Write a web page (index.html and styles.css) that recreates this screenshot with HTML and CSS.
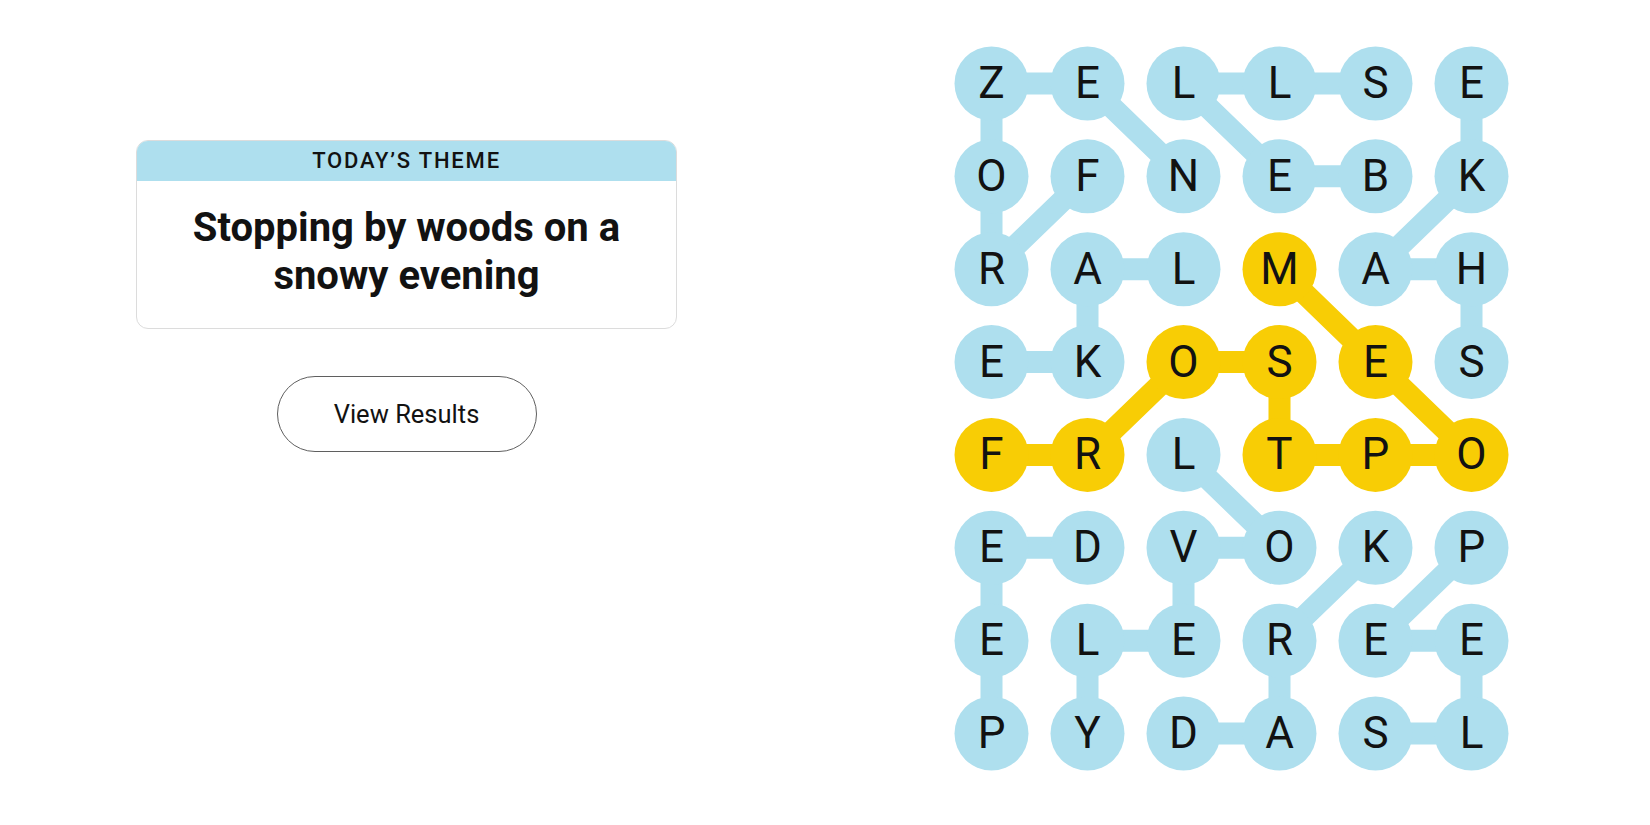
FILE: index.html
```html
<!DOCTYPE html>
<html lang="en">
<head>
<meta charset="utf-8">
<title>Strands</title>
<link rel="stylesheet" href="styles.css">
</head>
<body>
<main class="page">
  <section class="left">
    <div class="theme-card">
      <div class="theme-header">TODAY’S THEME</div>
      <h1 class="theme-title">Stopping by woods on a snowy evening</h1>
    </div>
    <button class="results-btn" type="button">View Results</button>
  </section>
  <section class="board">
    <svg class="board-svg" width="590" height="760" viewBox="0 0 590 760" xmlns="http://www.w3.org/2000/svg">
      <g transform="translate(51.5 53.5)">
        <g class="links-blue">
          <polyline points="96,92.86 0,185.71 0,92.86 0,0 96,0 192,92.86"/>
          <polyline points="384,92.86 288,92.86 192,0 288,0 384,0"/>
          <polyline points="480,278.57 480,185.71 384,185.71 480,92.86 480,0"/>
          <polyline points="192,185.71 96,185.71 96,278.57 0,278.57"/>
          <polyline points="192,371.43 288,464.29 192,464.29 192,557.14 96,557.14 96,650"/>
          <polyline points="96,464.29 0,464.29 0,557.14 0,650"/>
          <polyline points="192,650 288,650 288,557.14 384,464.29"/>
          <polyline points="384,650 480,650 480,557.14 384,557.14 480,464.29"/>
        </g>
        <g class="links-yellow">
          <polyline points="0,371.43 96,371.43 192,278.57 288,278.57 288,371.43 384,371.43 480,371.43 384,278.57 288,185.71"/>
        </g>
        <g class="dots">
          <circle class="b" cx="0" cy="0" r="37"/><circle class="b" cx="96" cy="0" r="37"/><circle class="b" cx="192" cy="0" r="37"/><circle class="b" cx="288" cy="0" r="37"/><circle class="b" cx="384" cy="0" r="37"/><circle class="b" cx="480" cy="0" r="37"/>
          <circle class="b" cx="0" cy="92.86" r="37"/><circle class="b" cx="96" cy="92.86" r="37"/><circle class="b" cx="192" cy="92.86" r="37"/><circle class="b" cx="288" cy="92.86" r="37"/><circle class="b" cx="384" cy="92.86" r="37"/><circle class="b" cx="480" cy="92.86" r="37"/>
          <circle class="b" cx="0" cy="185.71" r="37"/><circle class="b" cx="96" cy="185.71" r="37"/><circle class="b" cx="192" cy="185.71" r="37"/><circle class="y" cx="288" cy="185.71" r="37"/><circle class="b" cx="384" cy="185.71" r="37"/><circle class="b" cx="480" cy="185.71" r="37"/>
          <circle class="b" cx="0" cy="278.57" r="37"/><circle class="b" cx="96" cy="278.57" r="37"/><circle class="y" cx="192" cy="278.57" r="37"/><circle class="y" cx="288" cy="278.57" r="37"/><circle class="y" cx="384" cy="278.57" r="37"/><circle class="b" cx="480" cy="278.57" r="37"/>
          <circle class="y" cx="0" cy="371.43" r="37"/><circle class="y" cx="96" cy="371.43" r="37"/><circle class="b" cx="192" cy="371.43" r="37"/><circle class="y" cx="288" cy="371.43" r="37"/><circle class="y" cx="384" cy="371.43" r="37"/><circle class="y" cx="480" cy="371.43" r="37"/>
          <circle class="b" cx="0" cy="464.29" r="37"/><circle class="b" cx="96" cy="464.29" r="37"/><circle class="b" cx="192" cy="464.29" r="37"/><circle class="b" cx="288" cy="464.29" r="37"/><circle class="b" cx="384" cy="464.29" r="37"/><circle class="b" cx="480" cy="464.29" r="37"/>
          <circle class="b" cx="0" cy="557.14" r="37"/><circle class="b" cx="96" cy="557.14" r="37"/><circle class="b" cx="192" cy="557.14" r="37"/><circle class="b" cx="288" cy="557.14" r="37"/><circle class="b" cx="384" cy="557.14" r="37"/><circle class="b" cx="480" cy="557.14" r="37"/>
          <circle class="b" cx="0" cy="650" r="37"/><circle class="b" cx="96" cy="650" r="37"/><circle class="b" cx="192" cy="650" r="37"/><circle class="b" cx="288" cy="650" r="37"/><circle class="b" cx="384" cy="650" r="37"/><circle class="b" cx="480" cy="650" r="37"/>
        </g>
        <g class="letters">
          <text x="0" y="14.5">Z</text><text x="96" y="14.5">E</text><text x="192" y="14.5">L</text><text x="288" y="14.5">L</text><text x="384" y="14.5">S</text><text x="480" y="14.5">E</text>
          <text x="0" y="107.36">O</text><text x="96" y="107.36">F</text><text x="192" y="107.36">N</text><text x="288" y="107.36">E</text><text x="384" y="107.36">B</text><text x="480" y="107.36">K</text>
          <text x="0" y="200.21">R</text><text x="96" y="200.21">A</text><text x="192" y="200.21">L</text><text x="288" y="200.21">M</text><text x="384" y="200.21">A</text><text x="480" y="200.21">H</text>
          <text x="0" y="293.07">E</text><text x="96" y="293.07">K</text><text x="192" y="293.07">O</text><text x="288" y="293.07">S</text><text x="384" y="293.07">E</text><text x="480" y="293.07">S</text>
          <text x="0" y="385.93">F</text><text x="96" y="385.93">R</text><text x="192" y="385.93">L</text><text x="288" y="385.93">T</text><text x="384" y="385.93">P</text><text x="480" y="385.93">O</text>
          <text x="0" y="478.79">E</text><text x="96" y="478.79">D</text><text x="192" y="478.79">V</text><text x="288" y="478.79">O</text><text x="384" y="478.79">K</text><text x="480" y="478.79">P</text>
          <text x="0" y="571.64">E</text><text x="96" y="571.64">L</text><text x="192" y="571.64">E</text><text x="288" y="571.64">R</text><text x="384" y="571.64">E</text><text x="480" y="571.64">E</text>
          <text x="0" y="664.5">P</text><text x="96" y="664.5">Y</text><text x="192" y="664.5">D</text><text x="288" y="664.5">A</text><text x="384" y="664.5">S</text><text x="480" y="664.5">L</text>
        </g>
      </g>
    </svg>
  </section>
</main>
</body>
</html>
```

FILE: styles.css
```css
* {
  box-sizing: border-box;
}

html, body {
  margin: 0;
  padding: 0;
  background: #ffffff;
}

body {
  font-family: Roboto, "Liberation Sans", Arial, sans-serif;
  color: #121212;
}

.page {
  display: flex;
  align-items: flex-start;
  width: 1650px;
  height: 825px;
}

.left {
  width: 813px;
  padding-top: 140px;
  display: flex;
  flex-direction: column;
  align-items: center;
}

.theme-card {
  width: 541px;
  border: 1px solid #dcdcdc;
  border-radius: 12px;
  overflow: hidden;
  background: #ffffff;
}

.theme-header {
  height: 40px;
  line-height: 40px;
  background: #aedfee;
  text-align: center;
  font-size: 22px;
  font-weight: 500;
  letter-spacing: 1.8px;
  color: #121212;
}

.theme-title {
  margin: 0;
  padding: 23px 24px 28px;
  text-align: center;
  font-size: 40px;
  line-height: 48px;
  font-weight: 700;
  color: #121212;
}

.results-btn {
  margin-top: 47px;
  width: 260px;
  height: 76px;
  border: 1px solid #5f5f5f;
  border-radius: 38px;
  background: #ffffff;
  font-family: Roboto, "Liberation Sans", Arial, sans-serif;
  font-size: 25.5px;
  font-weight: 400;
  color: #121212;
  padding: 0;
}

.board {
  margin-left: 127px;
  margin-top: 30px;
}

.board-svg {
  display: block;
}

.links-blue polyline {
  fill: none;
  stroke: #aedfee;
  stroke-width: 22;
  stroke-linejoin: round;
}

.links-yellow polyline {
  fill: none;
  stroke: #f8cd05;
  stroke-width: 22;
  stroke-linejoin: round;
}

.dots .b {
  fill: #aedfee;
}

.dots .y {
  fill: #f8cd05;
}

.letters text {
  font-family: Roboto, "Liberation Sans", Arial, sans-serif;
  font-size: 44px;
  font-weight: 400;
  fill: #121212;
  text-anchor: middle;
}
```
